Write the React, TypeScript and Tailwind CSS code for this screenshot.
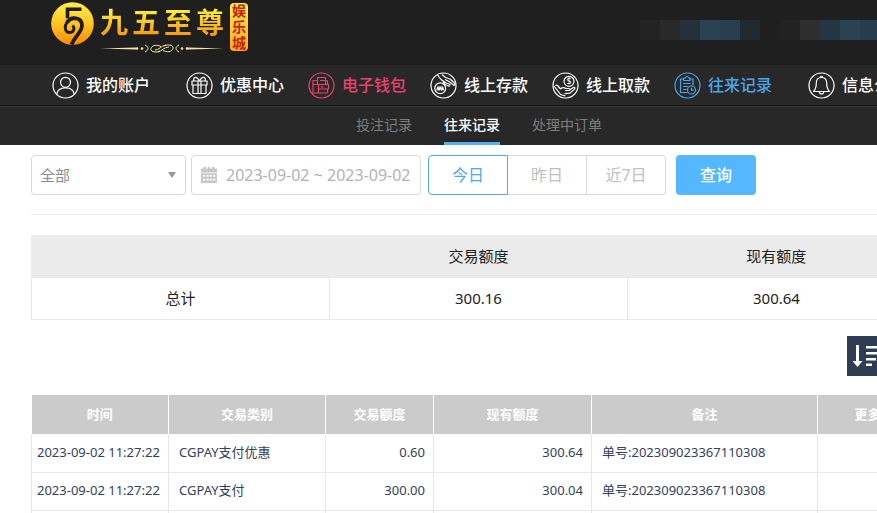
import React, { useState } from "react";

type NavItem = {
  label: string;
  icon: React.ReactNode;
  color: string;
};

type RecordRow = {
  time: string;
  type: string;
  amount: string;
  balance: string;
  note: string;
};

const accountNav: NavItem[] = [
  {
    label: "我的账户",
    color: "text-white",
    icon: (
      <>
        <circle cx="13.5" cy="10.3" r="5" />
        <path d="M4.8 22.2c.6-4.2 4.2-6.4 8.7-6.4s8.1 2.2 8.7 6.4" />
      </>
    ),
  },
];

const mainNav: NavItem[] = [
  {
    label: "优惠中心",
    color: "text-white",
    icon: (
      <>
        <path d="M6 9h15v4H6zM7 13h13v8.5H7zM12 9v12.5M15 9v12.5" />
        <path d="M13.5 9C11 4 6.5 4.5 8 9M13.5 9c2.5-5 7-4.5 5.5 0" />
      </>
    ),
  },
  {
    label: "电子钱包",
    color: "text-[#e8416f]",
    icon: (
      <>
        <path d="M9.5 13V5.5h8V12.5M9.5 8.5H5v12.5h13.5a1 1 0 0 0 1-1V17M12 8.5h6.5a1 1 0 0 1 1 1v3" />
        <path d="M5 12.5h15.5v4.5h-10v-4.5M13 14.8h2.5M10.5 17v4" />
      </>
    ),
  },
  {
    label: "线上存款",
    color: "text-white",
    icon: (
      <>
        <circle cx="10.2" cy="16.3" r="5.4" />
        <path d="M6.8 18.2l1-3 1.2 3 1.2-3 1.2 3 1.2-3 1 3M7.3 15h5.8" />
        <path d="M7.5 3l3.5 4.5 5 3.5 4.5 1.5M12 2.5l3.5 3 4.5 1.5 5 4.5M15 7.5l4 2 4.5 3.5c.8.7 1.6-.1 1-1M13 9.5l2 3 3.5 1.5c1 .4 1.5-.6.8-1.3" />
      </>
    ),
  },
  {
    label: "线上取款",
    color: "text-white",
    icon: (
      <>
        <circle cx="17" cy="9.3" r="5" />
        <text
          x="17"
          y="12.3"
          textAnchor="middle"
          fontSize="8"
          fill="currentColor"
          stroke="none"
        >
          $
        </text>
        <path d="M2 14l3.5 4.5 3 4 5 1.5M3.5 13.5c1-.8 1.8-.3 2.5.5l2.5 3M8.5 17c2.5-2.5 4-1 5.5-.5h3c1.5 0 1.5 2 0 2h-4M17.5 18l4-2.5c1.2-.7 2 .7 1 1.6l-4.5 4-5.5.5" />
      </>
    ),
  },
  {
    label: "往来记录",
    color: "text-[#4ba6e8]",
    icon: (
      <>
        <path d="M9.5 7H6.5v13.5h7M16 7h3v6.5M9.5 8.5V6h2a1.5 1.5 0 0 1 3 0H16v2.5z" />
        <path d="M9 11.5h7.5M9 14.5h5M9 17.5h3.5" />
        <circle cx="17.5" cy="18" r="4" />
        <path d="M17.5 15.7V18.2h2.2" />
      </>
    ),
  },
];

const messageNav: NavItem[] = [
  {
    label: "信息公告",
    color: "text-white",
    icon: (
      <>
        <path d="M13.5 5.5c-3.5 0-5.2 2.5-5.2 5.5 0 4.5-.8 6.5-2.8 8.5h16c-2-2-2.8-4-2.8-8.5 0-3-1.7-5.5-5.2-5.5z" />
        <path d="M12.3 5.5a1.2 1.2 0 0 1 2.4 0M11.3 19.7a2.2 2.2 0 0 0 4.4 0" />
      </>
    ),
  },
];

const subTabs = ["投注记录", "往来记录", "处理中订单"];
const ranges = ["今日", "昨日", "近7日"];

const rows: RecordRow[] = [
  {
    time: "2023-09-02 11:27:22",
    type: "CGPAY支付优惠",
    amount: "0.60",
    balance: "300.64",
    note: "单号:202309023367110308",
  },
  {
    time: "2023-09-02 11:27:22",
    type: "CGPAY支付",
    amount: "300.00",
    balance: "300.04",
    note: "单号:202309023367110308",
  },
  { time: "", type: "", amount: "", balance: "", note: "" },
];

function Logo() {
  return (
    <a href="#" className="flex items-start gap-[6px]">
      <svg className="mt-[2px] h-[43px] w-[43px]" viewBox="0 0 43 43">
        <defs>
          <linearGradient id="coin" x1="0" y1="0" x2="0" y2="1">
            <stop offset="0" stopColor="#fff04a" />
            <stop offset="0.5" stopColor="#ffc524" />
            <stop offset="1" stopColor="#f98a0c" />
          </linearGradient>
        </defs>
        <circle cx="21.5" cy="21.5" r="21.3" fill="url(#coin)" />
        <g fill="none" stroke="#211d14">
          <path d="M30.5 7.3H16.5v9" strokeWidth="3.6" />
          <path
            d="M16 20.5C20 14 31 15 31 23.5C31 30 24 34 20.5 42.5"
            strokeWidth="3.8"
          />
          <path
            d="M16.8 19.5C12.5 24 14 30.5 18.5 30.5C22.5 30.5 24.5 26.5 21.5 23.5"
            strokeWidth="2.8"
          />
        </g>
      </svg>
      <span className="flex flex-col">
        <span className="flex h-11 items-center gap-1 bg-linear-to-b from-[#fff23a] from-20% to-[#f79a12] to-80% bg-clip-text text-[28px] font-bold text-transparent">
          <span>九</span>
          <span>五</span>
          <span>至</span>
          <span>尊</span>
        </span>
        <svg
          className="h-[9px] w-[124px]"
          viewBox="0 0 124 9"
          fill="none"
          stroke="#f5e6a4"
        >
          <path
            d="M0 4.5l36-1v2zM124 4.5l-36-1v2z"
            fill="#f5e6a4"
            stroke="none"
          />
          <circle cx="37" cy="4.5" r="1.3" fill="#f5e6a4" stroke="none" />
          <circle cx="42" cy="4.5" r="1.3" fill="#f5e6a4" stroke="none" />
          <circle cx="82" cy="4.5" r="1.3" fill="#f5e6a4" stroke="none" />
          <circle cx="87" cy="4.5" r="1.3" fill="#f5e6a4" stroke="none" />
          <path d="M45 1c4 2 4 5 0 7M79 1c-4 2-4 5 0 7M60 7c-4 2-10 1-9-2.5s6-4 10-2M64 2c4-2 10-1 9 2.5s-6 4-10 2M55 6c4 0 6-4 11-5M58 8c4-1 6-5 11-5" />
        </svg>
      </span>
      <span className="mt-[3px] flex w-[18px] flex-col items-center rounded bg-linear-to-b from-[#fff04a] to-[#ffa81c] text-[14px] leading-4 font-bold text-[#c4200c]">
        <span>娱</span>
        <span>乐</span>
        <span>城</span>
      </span>
    </a>
  );
}

// masked account name and balance
function MaskedInfo() {
  return (
    <div className="flex shrink-0 gap-5" aria-hidden="true">
      <div className="flex">
        <span className="h-5 w-5 bg-[#232323]" />
        <span className="h-5 w-5 bg-[#292929]" />
        <span className="h-5 w-5 bg-[#24303a]" />
        <span className="h-5 w-5 bg-[#294252]" />
        <span className="h-5 w-5 bg-[#283e4e]" />
        <span className="h-5 w-5 bg-[#20292f]" />
      </div>
      <div className="flex">
        <span className="h-5 w-5 bg-[#222222]" />
        <span className="h-5 w-5 bg-[#2e2e2e]" />
        <span className="h-5 w-5 bg-[#243644]" />
        <span className="h-5 w-5 bg-[#294353]" />
        <span className="h-5 w-[17px] bg-[#263d4e]" />
      </div>
    </div>
  );
}

function NavGroup({ items }: { items: NavItem[] }) {
  return (
    <div className="flex shrink-0 gap-6">
      {items.map((item) => (
        <a
          key={item.label}
          href="#"
          className={`flex shrink-0 items-center gap-[7px] text-[16px] font-medium ${item.color}`}
        >
          <svg
            className="h-[27px] w-[27px]"
            viewBox="0 0 27 27"
            fill="none"
            stroke="currentColor"
            strokeWidth="1.2"
            strokeLinejoin="round"
          >
            <circle cx="13.5" cy="13.5" r="12.5" />
            {item.icon}
          </svg>
          <span className="whitespace-nowrap">{item.label}</span>
        </a>
      ))}
    </div>
  );
}

function Filters() {
  const [range, setRange] = useState("今日");

  return (
    <form
      className="flex items-center border-b border-[#ececec] pt-[10px] pb-[19px]"
      onSubmit={(e) => e.preventDefault()}
    >
      <div className="relative w-[155px]">
        <select
          aria-label="类别"
          className="h-10 w-full appearance-none rounded border border-[#d9d9d9] bg-white px-2 text-[15px] text-[#8c8c8c]"
        >
          <option>全部</option>
        </select>
        <svg
          className="pointer-events-none absolute top-[17px] right-[10px] h-[6px] w-2"
          viewBox="0 0 8 6"
          fill="#999999"
        >
          <path d="M0 0h8L4 6z" />
        </svg>
      </div>

      <label className="ml-[5px] flex h-10 w-[230px] items-center gap-2 rounded border border-[#d9d9d9] pl-2">
        <svg
          className="h-[18px] w-[18px] shrink-0"
          viewBox="0 0 18 18"
          fill="#c8c8c8"
        >
          <path d="M1 2.5h2.5V1H6v1.5h2V1h2v1.5h2V1h2.5v1.5H17V6.5H1z" />
          <path
            fillRule="evenodd"
            d="M1 7.3h16v9.7H1zM3 9v1.8h2.2V9zM6.4 9v1.8h2.2V9zM9.6 9v1.8h2.2V9zM13 9v1.8h2.2V9zM3 12.8v1.8h2.2v-1.8zM6.4 12.8v1.8h2.2v-1.8zM9.6 12.8v1.8h2.2v-1.8zM13 12.8v1.8h2.2v-1.8z"
          />
        </svg>
        <input
          type="text"
          aria-label="日期"
          defaultValue="2023-09-02 ~ 2023-09-02"
          className="w-full min-w-0 text-[16px] text-[#b3b3b3] outline-none"
        />
      </label>

      <div className="ml-[7px] flex">
        {ranges.map((r) => (
          <button
            key={r}
            type="button"
            onClick={() => setRange(r)}
            className={`h-10 border text-[16px] first:rounded-l last:rounded-r ${
              r === range
                ? "w-20 border-[#4fa9ea] text-[#4fa9ea]"
                : "w-[79px] border-l-0 border-[#d9d9d9] text-[#c0c0c0]"
            }`}
          >
            {r}
          </button>
        ))}
      </div>

      <button
        type="submit"
        className="ml-[10px] h-10 w-20 rounded bg-[#54b7ff] text-[16px] font-medium text-white"
      >
        查询
      </button>
    </form>
  );
}

function SummaryTable() {
  return (
    <table className="mt-5 w-full table-fixed border-collapse border border-[#ebebeb] text-center text-[15px] text-[#222222]">
      <thead>
        <tr className="h-[42px] bg-[#ebebeb]">
          <th aria-label="项目" />
          <th className="font-normal">交易额度</th>
          <th className="font-normal">现有额度</th>
        </tr>
      </thead>
      <tbody>
        <tr className="h-[42px]">
          <td className="border border-[#e8e8e8]">总计</td>
          <td className="border border-[#e8e8e8]">300.16</td>
          <td className="border border-[#e8e8e8]">300.64</td>
        </tr>
      </tbody>
    </table>
  );
}

function RecordTable() {
  return (
    <table className="mt-[19px] table-fixed border-collapse text-[13px] text-[#33415c]">
      <colgroup>
        <col className="w-[137px]" />
        <col className="w-[157px]" />
        <col className="w-[108px]" />
        <col className="w-[158px]" />
        <col className="w-[226px]" />
        <col className="w-[100px]" />
      </colgroup>
      <thead>
        <tr className="h-[39px] bg-[#cbcbcb] text-white">
          {["时间", "交易类别", "交易额度", "现有额度", "备注", "更多"].map(
            (h) => (
              <th
                key={h}
                className="border-r border-white text-center font-bold"
              >
                {h}
              </th>
            )
          )}
        </tr>
      </thead>
      <tbody>
        {rows.map((row, i) => (
          <tr key={i} className="h-[38px]">
            <td className="border border-t-0 border-[#e8e8e8] pl-[5px] whitespace-nowrap">
              {row.time}
            </td>
            <td className="border border-t-0 border-[#e8e8e8] px-[10px]">
              {row.type}
            </td>
            <td className="border border-t-0 border-[#e8e8e8] px-2 text-right">
              {row.amount}
            </td>
            <td className="border border-t-0 border-[#e8e8e8] px-2 text-right">
              {row.balance}
            </td>
            <td className="border border-t-0 border-[#e8e8e8] px-[10px]">
              {row.note}
            </td>
            <td className="border border-t-0 border-[#e8e8e8]" />
          </tr>
        ))}
      </tbody>
    </table>
  );
}

export default function App() {
  const [tab, setTab] = useState("往来记录");

  return (
    <div className="min-h-screen overflow-hidden bg-white font-['Noto_Sans','Noto_Sans_CJK_SC',sans-serif]">
      <header className="bg-[#1f1f1f]">
        <div className="flex h-[65px] items-start justify-between pl-[51px]">
          <Logo />
          <div className="pt-5">
            <MaskedInfo />
          </div>
        </div>

        <nav className="flex h-[41px] gap-9 border-b border-[#111111] bg-[#282828] pl-[52px]">
          <NavGroup items={accountNav} />
          <NavGroup items={mainNav} />
          <NavGroup items={messageNav} />
        </nav>

        <div className="flex h-[39px] gap-8 border-t border-[#3a3a3a] bg-[#282828] pl-[356px]">
          {subTabs.map((t) => (
            <button
              key={t}
              onClick={() => setTab(t)}
              className={`border-b-3 text-[14px] ${
                t === tab
                  ? "border-[#54b0f5] font-medium text-white"
                  : "border-transparent text-[#7d7d7d]"
              }`}
            >
              {t}
            </button>
          ))}
        </div>
      </header>

      <main className="min-w-[926px] pl-[31px]">
        <Filters />
        <SummaryTable />
        <div className="mt-4 flex justify-end">
          <button
            aria-label="排序"
            className="flex h-10 w-[79px] items-center bg-[#2f3d53] pl-[5px]"
          >
            <svg className="h-6 w-8" viewBox="0 0 32 24" fill="#ffffff">
              <path d="M4 1h3v16h3.5l-5 6-5-6H4z" />
              <path d="M14 2h17v2.5H14zM14 8h13v2.5H14zM14 14h10v2.5H14zM14 19.5h6V22h-6z" />
            </svg>
          </button>
        </div>
        <RecordTable />
      </main>
    </div>
  );
}
